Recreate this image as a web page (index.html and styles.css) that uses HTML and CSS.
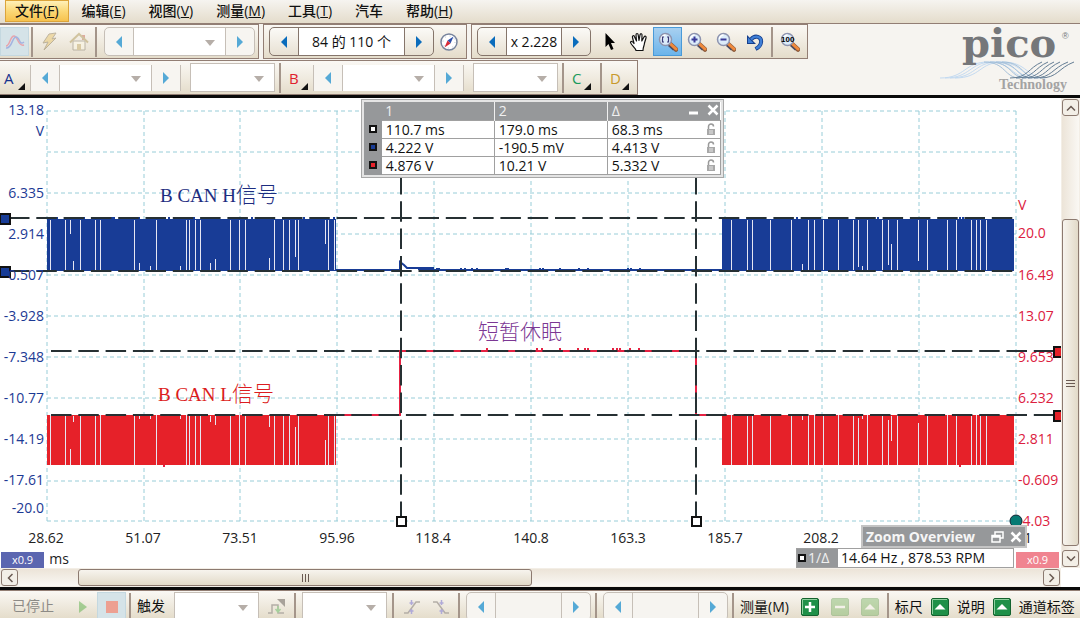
FILE: index.html
```
<!DOCTYPE html>
<html lang="zh-CN">
  <head>
    <meta charset="UTF-8" />
    <meta name="viewport" content="width=device-width, initial-scale=1.0" />
    <title>PicoScope</title>
    <link rel="stylesheet" href="styles.css">
  </head>
  <body>
    <!-- Shared icons -->
    <svg class="sprite" aria-hidden="true">
      <symbol id="left" viewBox="0 0 8 12"><path d="M7 0v12L1 6z" fill="currentColor" /></symbol>
      <symbol id="right" viewBox="0 0 8 12"><path d="M1 0v12l6-6z" fill="currentColor" /></symbol>
      <symbol id="lens" viewBox="0 0 20 20">
        <path d="M12 12l6 5.500" stroke="#8a5a3c" stroke-width="4.500" stroke-linecap="round" />
        <path d="M12.500 12l5.500 5" stroke="#f08a3c" stroke-width="3" stroke-linecap="round" />
        <path d="M10.500 13.500l5 4.500" stroke="#4a4a62" stroke-width="1.500" />
        <circle cx="7.500" cy="7.500" r="6" fill="#dcecfa" stroke="#8d93ae" stroke-width="1.500" />
        <path d="M3.500 7a4 4 0 0 1 4-4" stroke="#fff" fill="none" stroke-width="1.500" />
      </symbol>
      <symbol id="lock" viewBox="0 0 10 13">
        <path d="M2.500 6V3.500a2.500 2.500 0 0 1 5 0" fill="none" stroke="#9a9a9a" stroke-width="1.500" />
        <path d="M1 6h8v6H1z" fill="#a8a8a8" />
        <path d="M3 8h4M3 10h4" stroke="#e8e8e8" />
      </symbol>
      <symbol id="up" viewBox="0 0 18 18">
        <rect x=".5" y=".5" width="17" height="17" rx="1.500" fill="#1f9048" stroke="#14632f" />
        <path d="M1.500 16V1.500H16" fill="none" stroke="#8fd09f" />
        <path d="M3.500 11.500L9 6l5.500 5.500z" fill="#fff" />
      </symbol>
    </svg>

    <header>
      <nav class="menu">
        <button type="button" class="active">文件(<u>F</u>)</button>
        <button type="button">编辑(<u>E</u>)</button>
        <button type="button">视图(<u>V</u>)</button>
        <button type="button">测量(<u>M</u>)</button>
        <button type="button">工具(<u>T</u>)</button>
        <button type="button">汽车</button>
        <button type="button">帮助(<u>H</u>)</button>
      </nav>

      <div class="tools">
        <div class="bars">
          <div class="bar-row">
            <div class="bar">
              <button type="button" class="tool pressed" aria-label="Scope mode">
                <svg width="20" height="16" viewBox="0 0 20 16" fill="none" stroke-width="1.500">
                  <path d="M1 12c4 0 4-10 8-10s4 11 10 9" stroke="#e9a3ab" />
                  <path d="M1 14c6 1 6-11 10-11s3 9 8 5" stroke="#a3b3e0" />
                </svg>
              </button>
              <span class="sep"></span>
              <button type="button" class="tool dim" aria-label="Auto setup">
                <svg width="18" height="20" viewBox="0 0 18 20">
                  <path d="M8 2l7-1-4 6 4-1L3 18l4-8-5 1z" fill="#e8c46a" stroke="#8a7a5a" />
                </svg>
              </button>
              <button type="button" class="tool dim" aria-label="Home">
                <svg width="20" height="20" viewBox="0 0 20 20">
                  <path d="M13 3h3v5h-3z" fill="#c86a5a" />
                  <path d="M4 9h12v9H4z" fill="#fffbe8" stroke="#8a8272" />
                  <path d="M1 10.500L10 2l9 8.500" fill="none" stroke="#b09a5a" stroke-width="2" />
                  <path d="M8 12h4v6H8z" fill="#c8b070" />
                </svg>
              </button>
              <span class="sep"></span>
              <div class="spinner off">
                <button type="button" aria-label="Previous"><svg><use href="#left" /></svg></button>
                <span class="combo"><select aria-label="Timebase"><option></option></select></span>
                <button type="button" aria-label="Next"><svg><use href="#right" /></svg></button>
              </div>
            </div>

            <div class="bar">
              <div class="spinner">
                <button type="button" aria-label="Previous buffer"><svg><use href="#left" /></svg></button>
                <input class="buffer" type="text" value="84 的 110 个" aria-label="Buffer" />
                <button type="button" aria-label="Next buffer"><svg><use href="#right" /></svg></button>
              </div>
              <button type="button" class="tool" aria-label="Buffer navigator">
                <svg width="20" height="20" viewBox="0 0 20 20">
                  <circle cx="10" cy="10" r="8" fill="#fff" stroke="#76839c" stroke-width="1.500" />
                  <circle cx="10" cy="10" r="6" fill="none" stroke="#b8c0cc" stroke-dasharray="1 3.700" />
                  <path d="M14.500 4.500L11.500 11.500 8.500 8.500z" fill="#2d4fa8" />
                  <path d="M5.500 15.500L11.500 11.500 8.500 8.500z" fill="#d82a36" />
                </svg>
              </button>
            </div>

            <div class="bar">
              <div class="spinner">
                <button type="button" aria-label="Zoom out step"><svg><use href="#left" /></svg></button>
                <input class="factor" type="text" value="x 2.228" aria-label="Zoom factor" />
                <button type="button" aria-label="Zoom in step"><svg><use href="#right" /></svg></button>
              </div>
              <button type="button" class="tool first" aria-label="Normal selection">
                <svg width="12" height="19" viewBox="0 0 12 19">
                  <path d="M1.500 1v14l3-3 2.500 6 2.500-1L7 11h4z" fill="#000" />
                </svg>
              </button>
              <button type="button" class="tool" aria-label="Hand tool">
                <svg width="20" height="20" viewBox="0 0 20 20">
                  <path d="M7 18.500c0-2-5-5.500-5.500-8 0-1.500 2-1.500 3.500 1L3.500 5.500c-.5-2 1.500-2.500 2-.8L7.500 9 7 3c0-2 2-2 2.200 0L10 8.500 11 3c.4-2 2.300-1.500 2 .3L12.800 9l2.200-4c1-1.600 2.600-.8 2 1l-1.500 5c-.2 3-1.500 4-1.500 7.500z" fill="#fff" stroke="#111" stroke-width="1.200" stroke-linejoin="round" />
                </svg>
              </button>
              <button type="button" class="tool selected" aria-label="Marquee zoom">
                <svg width="20" height="20" viewBox="0 0 20 20"><use href="#lens" /><path d="M6 5H4.500v5H6M9 5h1.500v5H9" stroke="#3a3a78" fill="none" stroke-width="1.200" /></svg>
              </button>
              <button type="button" class="tool" aria-label="Zoom in">
                <svg width="20" height="20" viewBox="0 0 20 20"><use href="#lens" /><path d="M4.500 7.500h6M7.500 4.500v6" stroke="#3a3a98" stroke-width="2" /></svg>
              </button>
              <button type="button" class="tool" aria-label="Zoom out">
                <svg width="20" height="20" viewBox="0 0 20 20"><use href="#lens" /><path d="M4.500 7.500h6" stroke="#3a3a98" stroke-width="2" /></svg>
              </button>
              <button type="button" class="tool" aria-label="Undo zoom">
                <svg width="18" height="18" viewBox="0 0 18 18">
                  <path d="M5 6.500c4-5 11-3 10 3-.4 3-2.500 5-5.500 6.500" fill="none" stroke="#163f8c" stroke-width="4" />
                  <path d="M1 2v9h9z" fill="#163f8c" />
                  <path d="M5 6.500c4-5 11-3 10 3-.4 3-2.500 5-5 6" fill="none" stroke="#3f7fd6" stroke-width="2.400" />
                  <path d="M2 4.500V10h5.500z" fill="#3f7fd6" />
                </svg>
              </button>
              <span class="sep"></span>
              <button type="button" class="tool" aria-label="Zoom 100%">
                <svg width="20" height="20" viewBox="0 0 20 20"><use href="#lens" /><text class="hundred" x="1" y="10">100</text></svg>
              </button>
            </div>
          </div>

          <div class="bar-row">
            <div class="bar channels">
              <button type="button" class="channel ch-a">A</button>
              <div class="spinner off square">
                <button type="button" aria-label="A range down"><svg><use href="#left" /></svg></button>
                <span class="combo"><select aria-label="A range"><option></option></select></span>
                <button type="button" aria-label="A range up"><svg><use href="#right" /></svg></button>
              </div>
              <span class="combo boxed"><select aria-label="A coupling"><option></option></select></span>
              <span class="sep"></span>
              <button type="button" class="channel ch-b">B</button>
              <div class="spinner off square">
                <button type="button" aria-label="B range down"><svg><use href="#left" /></svg></button>
                <span class="combo"><select aria-label="B range"><option></option></select></span>
                <button type="button" aria-label="B range up"><svg><use href="#right" /></svg></button>
              </div>
              <span class="combo boxed"><select aria-label="B coupling"><option></option></select></span>
              <span class="sep"></span>
              <button type="button" class="channel ch-c">C</button>
              <span class="sep"></span>
              <button type="button" class="channel ch-d">D</button>
            </div>
          </div>
        </div>

        <svg class="logo" width="144" height="70" viewBox="0 0 144 70" role="img" aria-label="pico Technology">
          <g fill="none" stroke="#c3daf0">
            <path d="M4 54c26 0 24-16 48-16s24 16 42 16" />
            <path d="M9 54c26 0 24-16 48-16s24 16 42 16" />
            <path d="M14 54c26 0 24-16 48-16s24 16 42 16" />
            <path d="M19 54c26 0 24-16 48-16s24 16 42 16" />
          </g>
          <g fill="none" stroke="#a4bfd8">
            <path d="M48 38c22 0 20 16 36 16M54 38c22 0 20 16 36 16M60 38c22 0 20 16 36 16M66 38c22 0 20 16 36 16" />
          </g>
          <g fill="none" stroke="#647d94">
            <path d="M74 54c18 0 18-10 32-16M80 54c18 0 18-10 32-16M86 54c18 0 18-10 32-16M92 54c18 0 18-10 32-16M98 54c18 0 18-10 34-16M104 54c18 0 18-10 34-16" />
          </g>
          <text class="logo-name" x="26" y="33">pico</text>
          <text class="logo-reg" x="126" y="15">®</text>
          <text class="logo-sub" x="63" y="65">Technology</text>
        </svg>
      </div>
    </header>

    <main>
      <div class="scope">
        <svg class="plot" viewBox="0 98 1061 470">
          <!-- Grid -->
          <g class="grid">
            <path d="M47 111H1016M47 152H1016M47 193H1016M47 234H1016M47 275H1016M47 316H1016M47 357H1016M47 398H1016M47 439H1016M47 481H1016M47 521H1016" />
            <path d="M47 111V521M144 111V521M240 111V521M337 111V521M434 111V521M531 111V521M628 111V521M725 111V521M822 111V521M919 111V521M1016 111V521" />
          </g>

          <!-- Channel A -->
          <path class="fill-a" d="M47 219H336V271H47zM722 219H1014V271H722z" />
          <path class="line-a" d="M336 270H400V262L404 265 407 268H433V270H723" />
          <path class="line-a" d="M418 269H432M436 269H440" />
          <path class="blip-a" d="M461 268v2M465 268v2M472 268v2M477 268v2M506 268v2M508 268v2M540 268v2M543 268v2M560 268v2M579 268v2M588 268v2M628 268v2M631 268v2M640 268v2M57 217v2M84 217v2M112 217v2M114 217v2M139 217v2M169 217v2M194 217v2M252 217v2M304 217v2M334 217v2M797 217v2M878 217v2M960 217v2M963 217v2" />

          <!-- Channel B -->
          <path class="fill-b" d="M47 415H336V465H47zM722 415H1014V465H722z" />
          <path class="line-b" d="M336 415H400V351H696V415H723" />
          <path class="blip-b" d="M487 348v3M537 348v3M542 348v3M560 348v3M578 348v3M585 348v3M588 348v3M613 348v3M617 348v3M620 348v3M630 348v3M639 348v3M164 465v2M960 465v2" />

          <!-- Gaps between frames -->
          <g class="gaps">
            <g id="gaps">
              <path d="M50.5 220v50M65.5 220v50M80.5 220v50M95.5 220v50M100.5 220v50M134.5 220v50M156.5 220v50M186.5 220v50M189.5 220v50M195.5 220v50M200.5 220v50M230.5 220v50M239.5 220v50M245.5 220v50M274.5 220v50M283.5 220v50M289.5 220v50M298.5 220v50M328.5 220v50M334.5 220v50" />
              <path d="M731.5 220v50M747.5 220v50M752.5 220v50M770.5 220v50M791.5 220v50M808.5 220v50M814.5 220v50M823.5 220v50M838.5 220v50M853.5 220v50M867.5 220v50M882.5 220v50M897.5 220v50M927.5 220v50M947.5 220v50M956.5 220v50M971.5 220v50M976.5 220v50M980.5 220v50M986.5 220v50" />
            </g>
            <use href="#gaps" y="195" />
            <path d="M70.5 220v14M73.5 261v9M139.5 263v7M150.5 266v4M180.5 266v4M210.5 263v7M215.5 259v11M269.5 258v12M295.5 220v37M325.5 220v24M802.500 264v6M858.5 220v47M862.5 266v4M888.5 220v45M891.5 244v26M918.5 220v41" />
            <path d="M70.5 449v16M73.5 416v6M139.5 416v3M150.5 416v3M180.5 416v3M210.5 416v6M215.5 416v9M269.5 416v11M295.5 427v38M325.5 440v25M802.500 416v4M858.5 418v47M862.5 416v3M888.5 420v45M891.5 416v25M918.5 423v42" />
          </g>

          <!-- Rulers -->
          <g class="rulers">
            <path d="M9 218H1016M9 271H1016M51 351H1061M51 415H1061" />
            <path d="M401 174V517M696 174V517" />
          </g>
          <g class="handles">
            <path class="handle-a" d="M0 214h10v10H0zM0 267h10v10H0z" />
            <path class="handle-b" d="M1054 347h9v10h-9zM1054 411h9v10h-9z" />
            <path class="handle-t" d="M397 517h9v9h-9zM692 517h9v9h-9z" />
          </g>

          <!-- Axis labels -->
          <g class="axis axis-a">
            <text x="44" y="115">13.18</text>
            <text x="44" y="136">V</text>
            <text x="44" y="198">6.335</text>
            <text x="44" y="239">2.914</text>
            <text x="44" y="280">0.507</text>
            <text x="44" y="321">-3.928</text>
            <text x="44" y="362">-7.348</text>
            <text x="44" y="403">-10.77</text>
            <text x="44" y="444">-14.19</text>
            <text x="44" y="485">-17.61</text>
            <text x="44" y="513">-20.0</text>
          </g>
          <g class="axis axis-b">
            <text x="1018" y="210">V</text>
            <text x="1018" y="238">20.0</text>
            <text x="1018" y="280">16.49</text>
            <text x="1018" y="321">13.07</text>
            <text x="1018" y="362">9.653</text>
            <text x="1018" y="403">6.232</text>
            <text x="1018" y="444">2.811</text>
            <text x="1018" y="485">-0.609</text>
            <text x="1018" y="526">-4.03</text>
          </g>
          <g class="axis axis-t">
            <text x="46" y="543">28.62</text>
            <text x="143" y="543">51.07</text>
            <text x="240" y="543">73.51</text>
            <text x="337" y="543">95.96</text>
            <text x="433" y="543">118.4</text>
            <text x="531" y="543">140.8</text>
            <text x="628" y="543">163.3</text>
            <text x="725" y="543">185.7</text>
            <text x="821" y="543">208.2</text>
            <text x="1028" y="543">1</text>
            <text x="59" y="564">ms</text>
          </g>
          <circle class="trigger" cx="1016" cy="521" r="6" />

          <!-- Notes -->
          <text class="note note-a" x="160" y="202"><tspan class="latin">B CAN H</tspan>信号</text>
          <text class="note note-b" x="158" y="401"><tspan class="latin">B CAN L</tspan>信号</text>
          <text class="note note-sleep" x="478" y="339">短暂休眠</text>
        </svg>

        <section class="legend">
          <table>
            <thead>
              <tr>
                <th class="key"></th>
                <th>1</th>
                <th>2</th>
                <th>Δ</th>
              </tr>
            </thead>
            <tbody>
              <tr>
                <td class="key"><i class="chip"></i></td>
                <td>110.7 ms</td>
                <td>179.0 ms</td>
                <td>68.3 ms<svg class="lock"><use href="#lock" /></svg></td>
              </tr>
              <tr>
                <td class="key"><i class="chip blue"></i></td>
                <td>4.222 V</td>
                <td>-190.5 mV</td>
                <td>4.413 V<svg class="lock"><use href="#lock" /></svg></td>
              </tr>
              <tr>
                <td class="key"><i class="chip red"></i></td>
                <td>4.876 V</td>
                <td>10.21 V</td>
                <td>5.332 V<svg class="lock"><use href="#lock" /></svg></td>
              </tr>
            </tbody>
          </table>
          <div class="window-buttons">
            <button type="button" aria-label="Minimise"><svg width="12" height="12"><path d="M2 9h9" stroke="#fff" stroke-width="3" /></svg></button>
            <button type="button" aria-label="Close"><svg width="12" height="12"><path d="M1.500 1.500l9 9M10.500 1.500l-9 9" stroke="#fff" stroke-width="2.500" /></svg></button>
          </div>
        </section>

        <button type="button" class="scale scale-a">x0.9</button>

        <div class="readouts">
          <section class="overview">
            <h2>Zoom Overview</h2>
            <button type="button" aria-label="Restore"><svg width="13" height="12" fill="none" stroke="#fff" stroke-width="1.500"><path d="M4 4V1h8v6H9" /><path d="M1 4.500h8V11H1zM1 6h8" /></svg></button>
            <button type="button" aria-label="Close"><svg width="12" height="12"><path d="M1.500 1.500l9 9M10.500 1.500l-9 9" stroke="#fff" stroke-width="2.500" /></svg></button>
          </section>
          <div class="readout-row">
            <div class="frequency">
              <span class="frequency-key"><i class="chip"></i>1/Δ</span>
              <span class="frequency-value">14.64 Hz , 878.53 RPM</span>
            </div>
            <button type="button" class="scale scale-b">x0.9</button>
          </div>
        </div>
      </div>

      <div class="scroll vertical">
        <button type="button" aria-label="Scroll up"><svg width="10" height="6"><path d="M1 5.500l4-4 4 4" /></svg></button>
        <div class="track"><div class="thumb"><svg width="9" height="8"><path d="M0 1.500h9M0 4.500h9M0 7.500h9" /></svg></div></div>
        <button type="button" aria-label="Scroll down"><svg width="10" height="6"><path d="M1 .5l4 4 4-4" /></svg></button>
      </div>

      <div class="scroll horizontal">
        <button type="button" aria-label="Scroll left"><svg width="6" height="10"><path d="M5.500 1l-4 4 4 4" /></svg></button>
        <div class="track"><div class="thumb"><svg width="8" height="8"><path d="M1.500 0v8M4.500 0v8M7.500 0v8" /></svg></div></div>
        <button type="button" aria-label="Scroll right"><svg width="6" height="10"><path d="M.5 1l4 4-4 4" /></svg></button>
      </div>
    </main>

    <footer>
      <span class="status">已停止</span>
      <button type="button" class="tool dim" aria-label="Start"><svg width="10" height="14"><path d="M1 1v12l8-6z" fill="#5cb04a" /></svg></button>
      <button type="button" class="tool pressed" aria-label="Stop"><svg width="12" height="12"><path d="M0 0h12v12H0z" fill="#eda092" /></svg></button>
      <span class="sep"></span>
      <label for="trigger">触发</label>
      <span class="combo boxed"><select id="trigger"><option></option></select></span>
      <button type="button" class="tool" aria-label="Advanced trigger">
        <svg width="20" height="18" viewBox="0 0 20 18" fill="none">
          <path d="M1 15h4V7h6v8h6" stroke="#b4aea6" stroke-width="1.500" />
          <path d="M10 1h8v8z" fill="#a8a29a" />
          <path d="M11 8v5M8.500 11l2.500 3 2.500-3" stroke="#a6d09c" stroke-width="1.500" />
        </svg>
      </button>
      <span class="sep"></span>
      <span class="combo boxed"><select aria-label="Trigger source"><option></option></select></span>
      <span class="sep"></span>
      <button type="button" class="tool" aria-label="Rising edge">
        <svg width="18" height="16" fill="none"><path d="M1 14h4L13 3h4" stroke="#b4aea6" stroke-width="1.500" /><path d="M8.500 1v5M8.500 10v5M6.500 4h4M6.500 12h4" stroke="#b0aad8" stroke-width="1.500" /></svg>
      </button>
      <button type="button" class="tool" aria-label="Falling edge">
        <svg width="18" height="16" fill="none"><path d="M1 3h4l8 11h4" stroke="#b4aea6" stroke-width="1.500" /><path d="M9.500 1v5M9.500 10v5M7.500 4h4M7.500 12h4" stroke="#b0aad8" stroke-width="1.500" /></svg>
      </button>
      <span class="sep"></span>
      <div class="spinner off">
        <button type="button" aria-label="Threshold down"><svg><use href="#left" /></svg></button>
        <input class="level" type="text" aria-label="Threshold" />
        <button type="button" aria-label="Threshold up"><svg><use href="#right" /></svg></button>
      </div>
      <span class="sep"></span>
      <div class="spinner off">
        <button type="button" aria-label="Pre-trigger down"><svg><use href="#left" /></svg></button>
        <input class="level" type="text" aria-label="Pre-trigger" />
        <button type="button" aria-label="Pre-trigger up"><svg><use href="#right" /></svg></button>
      </div>
      <span class="sep"></span>
      <div class="actions">
        <span>测量(M)</span>
        <button type="button" aria-label="Add measurement">
          <svg width="18" height="18"><rect x=".5" y=".5" width="17" height="17" rx="1.500" fill="#1f9048" stroke="#14632f" /><path d="M1.500 16V1.500H16" fill="none" stroke="#8fd09f" /><path d="M4 9h10M9 4v10" stroke="#fff" stroke-width="2.500" /></svg>
        </button>
        <button type="button" class="faded" aria-label="Edit measurement">
          <svg width="18" height="18"><rect x=".5" y=".5" width="17" height="17" rx="1.500" fill="#6fb35a" stroke="#5a9a4a" /><path d="M4 9h10" stroke="#fff" stroke-width="2.500" /></svg>
        </button>
        <button type="button" class="faded" aria-label="Delete measurement">
          <svg width="18" height="18"><rect x=".5" y=".5" width="17" height="17" rx="1.500" fill="#6fb35a" stroke="#5a9a4a" /><path d="M3.500 11.500L9 6l5.500 5.500z" fill="#fff" /></svg>
        </button>
      </div>
      <span class="sep"></span>
      <div class="actions compact">
        <span>标尺</span>
        <button type="button" aria-label="Rulers"><svg width="18" height="18"><use href="#up" /></svg></button>
        <span>说明</span>
        <button type="button" aria-label="Notes"><svg width="18" height="18"><use href="#up" /></svg></button>
        <span>通道标签</span>
      </div>
    </footer>
  </body>
</html>
```

FILE: styles.css
```
/* Base */
* {
  box-sizing: border-box;
  margin: 0;
  padding: 0;
}

body {
  font-family: "Open Sans", "Noto Sans CJK SC", sans-serif;
  font-size: 14px;
  line-height: 18px;
  color: #111;
  background-color: #f6f4f0;
  min-height: 100vh;
  display: flex;
  flex-direction: column;
  overflow: hidden;
}

button,
input,
select {
  font: inherit;
  color: inherit;
  border: none;
  border-radius: 0;
  background: none;
}

svg {
  display: block;
}

.sprite {
  display: none;
}

/* Menu */
header {
  border-bottom: 3px solid #0a0a0a;
}

.menu {
  display: flex;
  gap: 3px;
  height: 24px;
  padding-left: 5px;
  font-weight: 500;
  background: linear-gradient(#f6f4f0, #e4dccb);
  border-bottom: 1px solid #927e74;
}

.menu button {
  height: 22px;
  padding: 0 9px;
  border: 1px solid transparent;
  white-space: nowrap;
}

.menu .active {
  border-color: #dca43a;
  background: linear-gradient(#fff0b8, #fbd877 50%, #f6c24e);
}

/* Toolbars */
.tools {
  display: flex;
  justify-content: space-between;
  height: 71px;
}

.bars {
  display: flex;
  flex-direction: column;
  gap: 1px;
}

.bar-row {
  display: flex;
  gap: 4px;
}

.bar {
  display: flex;
  align-items: center;
  height: 35px;
  padding: 0 3px 0 5px;
  border: 1px solid #927e74;
  background: linear-gradient(#faf8f4, #f0ebe0 50%, #e4dcca);
}

.bar-row .bar:first-child {
  padding-left: 0;
  border-left: none;
}

.sep {
  flex: none;
  width: 2px;
  height: 30px;
  margin: 0 2px;
  background-color: #a4958a;
}

.bar .sep + .spinner {
  margin-left: 5px;
}

.tool {
  flex: none;
  display: flex;
  align-items: center;
  justify-content: center;
  width: 29px;
  height: 29px;
}

.tool.first {
  margin-left: 4px;
}

.dim svg {
  opacity: 0.5;
}

.pressed {
  background-color: #d5e3e8;
  border: 1px solid #c4d8e0;
}

.selected {
  background: linear-gradient(#a8d0f0, #6cb4ea);
  border: 1px solid #4a9ad8;
}

.hundred {
  font: bold 8px "Liberation Sans", sans-serif;
}

/* Spinners and drop-downs */
.spinner {
  flex: none;
  display: flex;
  height: 29px;
  border: 1px solid #85756b;
  border-radius: 5px;
  background: linear-gradient(#fbfaf7, #e8e1d3);
  overflow: hidden;
}

.spinner button {
  width: 28px;
  display: flex;
  align-items: center;
  justify-content: center;
  color: #0a6cbc;
}

.spinner svg {
  width: 8px;
  height: 12px;
}

.spinner input {
  background-color: #fff;
  border: solid #85756b;
  border-width: 0 1px;
  text-align: center;
}

.buffer {
  width: 107px;
}

.factor {
  width: 56px;
}

.spinner.off {
  border-color: #c6bfb7;
  background: #f7f5f1;
}

.off button {
  color: #55a9d6;
}

.spinner.square {
  border-radius: 0;
  height: 26px;
  border-width: 0 1px;
}

.spinner .level {
  width: 67px;
  background-color: #f6f4f0;
  border-color: #c6bfb7;
}

.combo {
  position: relative;
  display: flex;
  width: 93px;
  background-color: #fff;
  border: solid #c6bfb7;
  border-width: 0 1px;
}

.combo select {
  appearance: none;
  width: 100%;
}

.combo::after {
  content: "";
  position: absolute;
  right: 10px;
  top: 50%;
  margin-top: -2px;
  border: 5px solid transparent;
  border-top: 6px solid #b6aea8;
  border-bottom: none;
  pointer-events: none;
}

.combo.boxed {
  flex: none;
  width: 85px;
  height: 29px;
  border-width: 1px;
}

/* Channel bar */
.channels .sep {
  margin: 0 4px;
}

.channels .boxed {
  margin-left: 9px;
}

.channel {
  position: relative;
  width: 30px;
  height: 30px;
  padding-left: 4px;
  font-size: 15px;
  font-weight: 500;
  text-align: left;
}

.channel::after {
  content: "";
  position: absolute;
  right: 5px;
  bottom: 3px;
  border-left: 7px solid transparent;
  border-bottom: 7px solid #111;
}

.ch-a {
  color: #15318e;
}

.ch-b {
  color: #e0202c;
}

.ch-c {
  color: #1a9a5a;
}

.ch-d {
  color: #c8992a;
}

.channels .sep + .channel {
  width: 28px;
}

/* Logo */
.logo {
  flex: none;
}

.logo-name {
  font: bold 40px "DejaVu Serif", serif;
  fill: #75777a;
}

.logo-reg {
  font: 9px "Liberation Sans", sans-serif;
  fill: #75777a;
}

.logo-sub {
  font: bold 14px "Liberation Serif", serif;
  fill: #a3a3a3;
}

/* Scope */
main {
  display: grid;
  grid-template-columns: 1fr 19px;
  background-color: #fff;
  border-bottom: 3px solid #0a0a0a;
}

.scope {
  position: relative;
}

.plot {
  width: 100%;
  height: auto;
}

.grid path {
  fill: none;
  stroke: #98cdd8;
  stroke-dasharray: 4 3;
}

.fill-a {
  fill: #183c96;
}

.line-a,
.blip-a {
  fill: none;
  stroke: #183c96;
  stroke-width: 2;
}

.fill-b {
  fill: #e62129;
}

.line-b,
.blip-b {
  fill: none;
  stroke: #e62142;
  stroke-width: 2;
}

.gaps {
  fill: none;
  stroke: #e6e6f2;
}

.rulers path {
  fill: none;
  stroke: #263033;
  stroke-width: 2;
  stroke-dasharray: 20.5 6.8;
}

.handles path {
  stroke: #111;
  stroke-width: 2;
}

.handles .handle-a {
  fill: #183c96;
}

.handles .handle-b {
  fill: #e62129;
}

.handles .handle-t {
  fill: #fff;
}

.trigger {
  fill: #067a74;
  stroke: #123;
}

.axis {
  font-size: 14px;
  font-weight: 500;
}

.axis-a {
  fill: #1c3a94;
  text-anchor: end;
}

.axis-b {
  fill: #dc2040;
}

.axis-t {
  fill: #222;
  text-anchor: middle;
}

.note {
  font-family: "Noto Sans CJK SC", sans-serif;
  font-size: 21px;
  font-weight: 300;
}

.latin {
  font-family: "Liberation Serif", serif;
  font-size: 19px;
}

.note-a {
  fill: #1c2c80;
}

.note-b {
  fill: #dc1c20;
}

.note-sleep {
  fill: #7c3894;
}

/* Ruler legend */
.legend {
  position: absolute;
  top: 1px;
  left: 34%;
  width: 363px;
  padding: 2px;
  background-color: #e4e4e4;
  border: 1px solid #a8a8a8;
}

.legend table {
  width: 100%;
  table-layout: fixed;
  border-collapse: collapse;
  font-weight: 500;
  background-color: #fff;
}

.legend th,
.legend td {
  height: 18px;
  padding: 0 4px;
  line-height: 17px;
  text-align: left;
  white-space: nowrap;
}

.legend th {
  background-color: #96989a;
  color: #f0f0f0;
  font-weight: 400;
  border-right: 1px solid #f0f0f0;
}

.legend th:first-child,
.legend th:last-child {
  border-right: none;
}

.legend td {
  border: 1px solid #a0a0a0;
}

.legend .key {
  width: 17px;
  background-color: #96989a;
  border-color: #96989a;
}

.chip {
  display: block;
  width: 8px;
  height: 8px;
  background-color: #fff;
  border: 2px solid #111;
}

.chip.blue {
  background-color: #183c96;
}

.chip.red {
  background-color: #e62129;
}

.lock {
  float: right;
  width: 10px;
  height: 13px;
  margin-top: 2px;
}

.window-buttons {
  position: absolute;
  top: 4px;
  right: 4px;
  display: flex;
  gap: 8px;
}

/* Scale buttons and readouts */
.scale {
  height: 16px;
  width: 43px;
  font-size: 11px;
  line-height: 16px;
  color: #fff;
}

.scale-a {
  position: absolute;
  left: 1px;
  bottom: 0;
  background-color: #5b66b0;
}

.scale-b {
  background-color: #f08490;
}

.readouts {
  position: absolute;
  right: 2px;
  bottom: 0;
}

.overview {
  display: flex;
  align-items: center;
  gap: 6px;
  width: 166px;
  height: 23px;
  margin-left: auto;
  margin-right: 32px;
  padding: 0 3px;
  background-color: #96989a;
  border: 2px solid #c4c4c4;
}

.overview h2 {
  flex: 1;
  font-size: 14px;
  color: #f6f6f6;
  white-space: nowrap;
}

.readout-row {
  display: flex;
  align-items: flex-end;
  gap: 2px;
}

.frequency {
  display: flex;
  width: 218px;
  height: 20px;
  background-color: #fff;
  border: 1px solid #a0a0a0;
}

.frequency-key {
  display: flex;
  align-items: center;
  gap: 2px;
  width: 41px;
  padding-left: 1px;
  color: #f0f0f0;
  background-color: #96989a;
}

.frequency-value {
  padding-left: 3px;
  font-weight: 500;
  white-space: nowrap;
}

/* Scrollbars */
.scroll {
  display: flex;
  padding: 1px;
  background-color: #f3eee6;
}

.scroll button,
.thumb {
  display: flex;
  align-items: center;
  justify-content: center;
  border: 1px solid #8c7a70;
  border-radius: 3px;
}

.scroll button {
  flex: none;
  width: 17px;
  height: 17px;
  background-color: #f3efe7;
}

.scroll path {
  fill: none;
  stroke: #6a5a52;
  stroke-width: 1.5;
}

.thumb path {
  stroke-width: 1;
}

.track {
  flex: 1;
  display: flex;
}

.vertical {
  flex-direction: column;
}

.vertical .track {
  flex-direction: column;
  padding-bottom: 4px;
  background: linear-gradient(90deg, #ece4d8, #faf8f4);
}

.vertical .thumb {
  height: 76%;
  margin-top: auto;
  background: linear-gradient(90deg, #f7f4ee, #e2dac8);
}

.horizontal .track {
  padding-left: 60px;
  background: linear-gradient(#ece4d8, #faf8f4);
}

.horizontal .thumb {
  width: 47%;
  background: linear-gradient(#f7f4ee, #e2dac8);
}

/* Bottom bar */
footer {
  display: flex;
  align-items: flex-start;
  height: 29px;
  padding-top: 1px;
  border-top: 1px solid #927e74;
  background: linear-gradient(#faf8f4, #e4dcca);
  overflow: hidden;
  white-space: nowrap;
}

footer > * {
  flex: none;
}

footer .sep {
  margin: 1px 3px;
}

.status {
  width: 68px;
  padding: 5px 0 0 12px;
  color: #8c8a86;
}

footer label {
  padding: 5px 9px 0 3px;
}

footer .combo {
  margin-right: 3px;
}

footer .sep + .combo {
  margin-left: 3px;
  margin-right: 2px;
}

footer .sep + .spinner {
  margin: 0 1px 0 3px;
}

.actions {
  display: flex;
  align-items: center;
  gap: 12px;
  height: 29px;
  padding: 0 5px 0 3px;
}

.actions.compact {
  gap: 8px;
  padding-right: 0;
}

.faded {
  opacity: 0.4;
}
```
